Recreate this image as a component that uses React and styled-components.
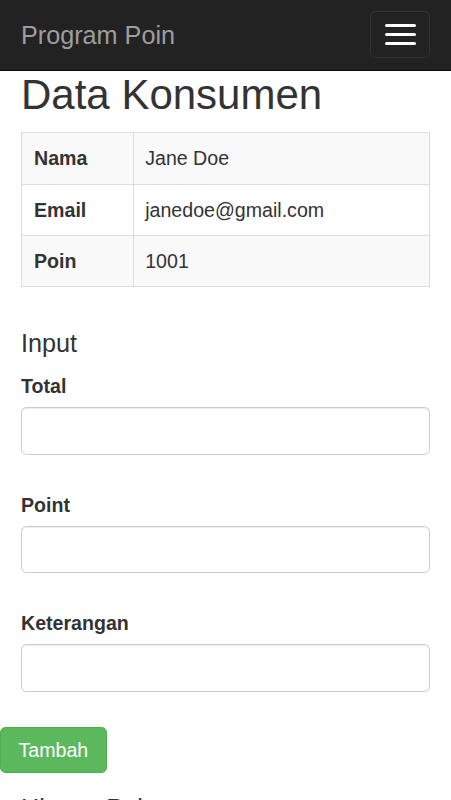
import React from "react";
import styled, { createGlobalStyle } from "styled-components";

const GlobalStyle = createGlobalStyle`
  html, body {
    margin: 0;
    padding: 0;
    background: #fff;
  }
  body {
    font-family: "Liberation Sans", Arial, Helvetica, sans-serif;
    font-size: 19.6px;
    line-height: 28px;
    color: #333;
  }
  * { box-sizing: border-box; }
`;

const Navbar = styled.nav`
  height: 71px;
  background: #222;
  border-bottom: 1px solid #080808;
  display: flex;
  align-items: center;
  justify-content: space-between;
  padding: 0 21px 0 21px;
`;

const Brand = styled.a`
  font-size: 25.2px;
  line-height: 28px;
  color: #9d9d9d;
  text-decoration: none;
`;

const Toggle = styled.button`
  width: 60px;
  height: 47px;
  margin-top: -1px;
  background: transparent;
  border: 1px solid #333;
  border-radius: 5.6px;
  display: flex;
  flex-direction: column;
  align-items: center;
  justify-content: center;
  gap: 5.6px;
  padding: 0;
`;

const Bar = styled.span`
  display: block;
  width: 31px;
  height: 3px;
  border-radius: 1.5px;
  background: #fff;
`;

const Container = styled.div`
  display: flex;
  flex-direction: column;
  padding: 0 21px;
`;

const PageTitle = styled.h2`
  margin: 1px 0 14px;
  font-size: 42px;
  line-height: 46.2px;
  font-weight: 500;
  color: #333;
`;

const Table = styled.table`
  width: 100%;
  border-collapse: collapse;
  border: 1px solid #ddd;
`;

const Row = styled.tr`
  background: ${(p) => (p.$striped ? "#f9f9f9" : "#fff")};
`;

const HeadCell = styled.th`
  width: 112px;
  text-align: left;
  font-weight: 700;
  padding: 11.2px 12px;
  line-height: 28px;
  border: 1px solid #ddd;
  vertical-align: top;
`;

const Cell = styled.td`
  padding: 11.2px 11.2px;
  line-height: 28px;
  border: 1px solid #ddd;
  vertical-align: top;
`;

const SectionTitle = styled.h4`
  margin: ${(p) => p.$top}px 0 14px;
  font-size: 25.2px;
  line-height: 27.7px;
  font-weight: 500;
  color: #333;
`;

const FormGroup = styled.div`
  display: flex;
  flex-direction: column;
  align-items: flex-start;
  margin-bottom: 36px;
  &:last-child {
    margin-bottom: 35px;
  }
`;

const Label = styled.label`
  font-weight: 700;
  line-height: 28px;
  margin-bottom: 7px;
`;

const Input = styled.input`
  width: 100%;
  height: 47.6px;
  padding: 8.4px 16.8px;
  font-size: 19.6px;
  font-family: inherit;
  color: #555;
  background: #fff;
  border: 1px solid #ccc;
  border-radius: 5.6px;
  box-shadow: inset 0 1px 1px rgba(0, 0, 0, 0.075);
  outline: none;
`;

const ButtonBar = styled.div`
  display: flex;
`;

const Button = styled.button`
  height: 46px;
  padding: 0 17.5px;
  font-family: inherit;
  font-size: 19.6px;
  line-height: 28px;
  color: #fff;
  background: #5cb85c;
  border: 1px solid #4cae4c;
  border-radius: 5.6px;
`;

const rows = [
  ["Nama", "Jane Doe"],
  ["Email", "janedoe@gmail.com"],
  ["Poin", "1001"],
];

const fields = ["Total", "Point", "Keterangan"];

export default function App() {
  return (
    <>
      <GlobalStyle />
      <Navbar>
        <Brand href="#">Program Poin</Brand>
        <Toggle type="button" aria-label="Toggle navigation">
          <Bar />
          <Bar />
          <Bar />
        </Toggle>
      </Navbar>
      <Container>
        <PageTitle>Data Konsumen</PageTitle>
        <Table>
          <tbody>
            {rows.map(([k, v], i) => (
              <Row key={k} $striped={i % 2 === 0}>
                <HeadCell>{k}</HeadCell>
                <Cell>{v}</Cell>
              </Row>
            ))}
          </tbody>
        </Table>
        <SectionTitle $top={43}>Input</SectionTitle>
        {fields.map((f) => (
          <FormGroup key={f}>
            <Label>{f}</Label>
            <Input type="text" />
          </FormGroup>
        ))}
      </Container>
      <ButtonBar>
        <Button type="button">Tambah</Button>
      </ButtonBar>
      <Container>
        <SectionTitle $top={22}>History Poin</SectionTitle>
      </Container>
    </>
  );
}
